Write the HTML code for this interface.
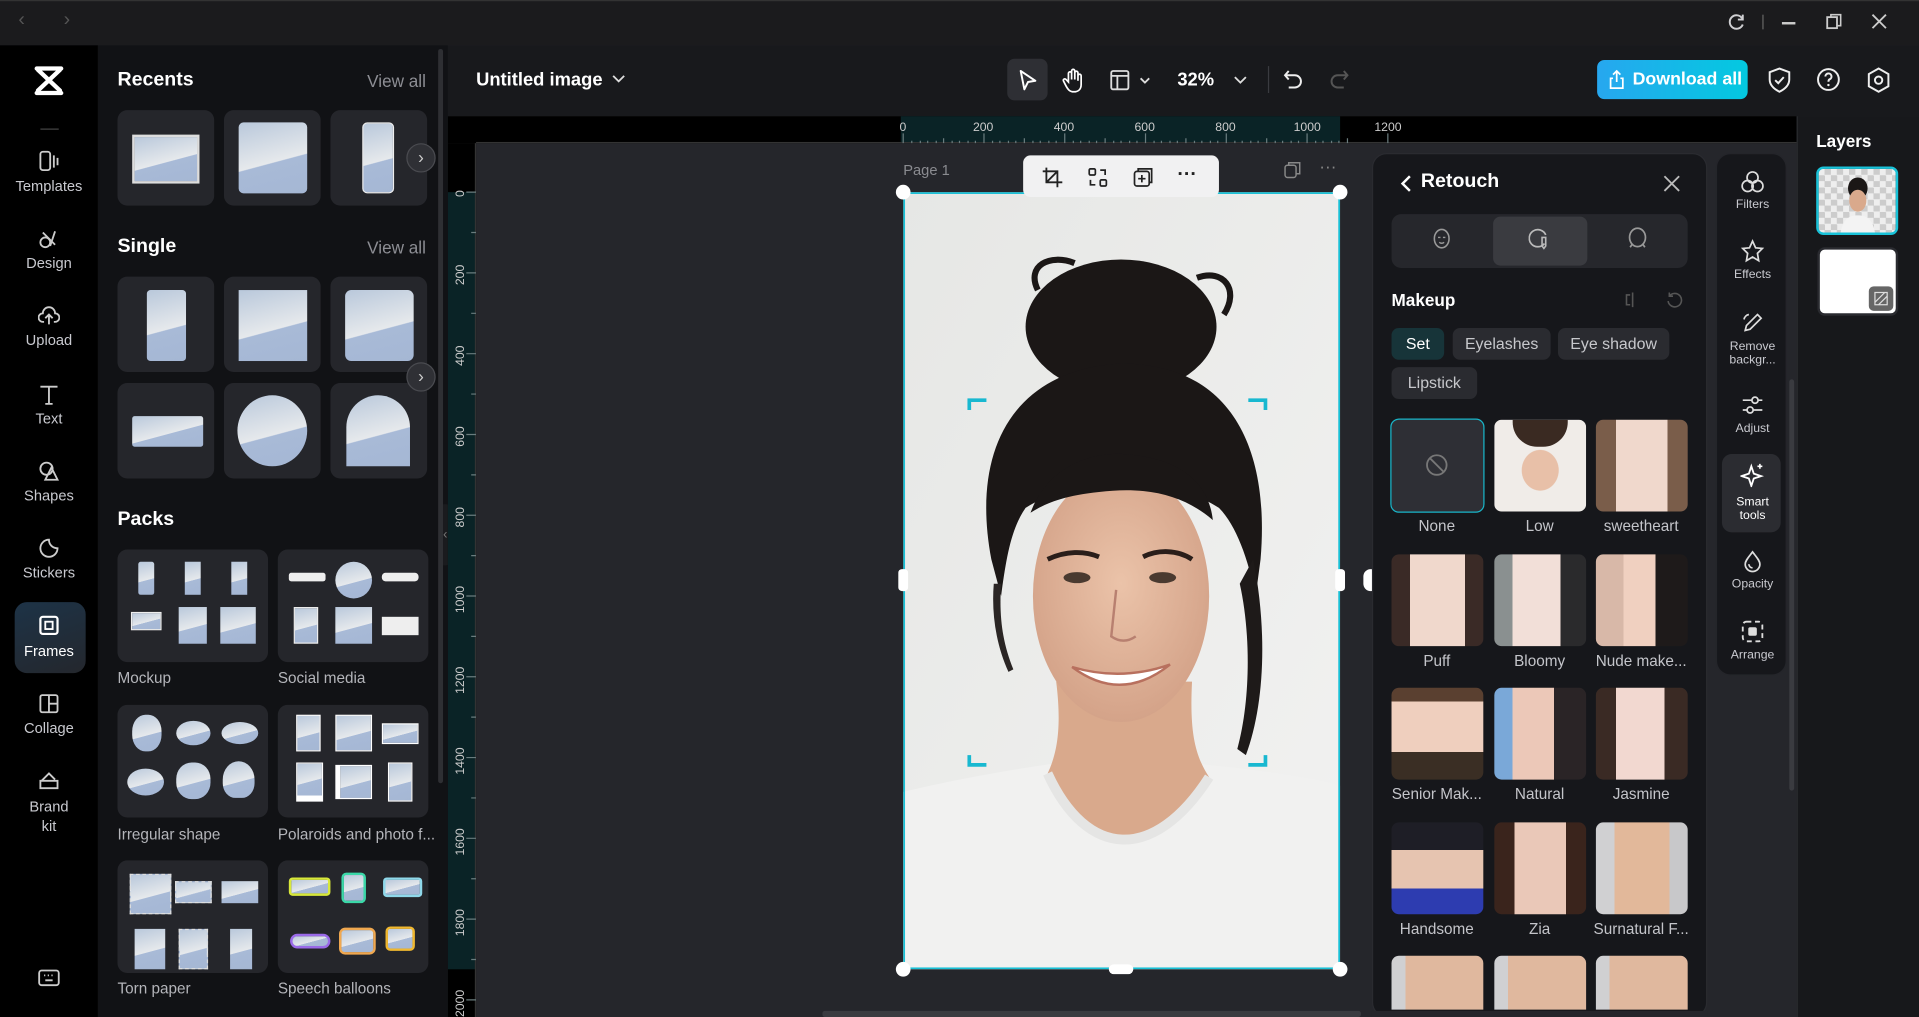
<!DOCTYPE html>
<html><head><meta charset="utf-8"><style>
*{margin:0;padding:0;box-sizing:border-box}
html,body{width:1919px;height:1017px;overflow:hidden;background:#111}
#w{position:absolute;left:0;top:0;width:1568px;height:831px;transform:scale(1.22385,1.22383);transform-origin:0 0;font-family:"Liberation Sans",sans-serif;color:#e6e6e8;overflow:hidden;background:#25262b}
.a{position:absolute}
.t{position:absolute;white-space:nowrap}
.nav .t{width:80px;left:0;text-align:center;font-size:12px;color:#c9cad0}
.nav svg{position:absolute;left:31px}
.card{position:absolute;background:#25262b;border-radius:8px}
.pic{position:absolute;background:linear-gradient(165deg,#b9c8db 0%,#e6e9ec 55%,#a8bad7 56%,#a5b7d4 100%)}
.h{font-weight:bold;font-size:16px;color:#fff}
.va{font-size:14px;color:#8d8e94}
.pk{font-size:12.5px;color:#b4b5ba}
.arrow{position:absolute;width:24px;height:24px;border-radius:50%;background:#2f3035;border:1px solid #4a4b50;color:#ccc;font-size:14px;text-align:center;line-height:21px}
.chip{position:absolute;height:26px;border-radius:6px;background:#2a2b30;font-size:13px;color:#c7c8cc;line-height:26px;text-align:center}
.ph{position:absolute;width:75px;height:75px;border-radius:6px;overflow:hidden}
.lb{position:absolute;width:84px;text-align:center;font-size:12.5px;color:#c4c5ca}
.rt .t{width:58px;text-align:center;left:0;font-size:10px;color:#c9cad0;line-height:11px}
.rt svg{position:absolute;left:19px}
</style></head><body><div id="w">
<!-- title bar -->
<div class="a" style="left:0;top:0;width:1568px;height:37px;background:#1b1b1d;border-top:1px solid #333"></div>
<div class="t" style="left:15px;top:8px;color:#555;font-size:16px">&#8249;</div>
<div class="t" style="left:52px;top:8px;color:#555;font-size:16px">&#8250;</div>
<svg class="a" style="left:1411px;top:10px" width="16" height="16" viewBox="0 0 16 16"><path d="M12.5 5A5.5 5.5 0 1 0 13 10" stroke="#cfcfd2" stroke-width="1.6" fill="none"/><path d="M13 2v4h-4" stroke="#cfcfd2" stroke-width="1.6" fill="none"/></svg>
<div class="a" style="left:1440px;top:12px;width:1px;height:12px;background:#666"></div>
<div class="a" style="left:1456px;top:18px;width:11px;height:1.5px;background:#ccc"></div>
<svg class="a" style="left:1492px;top:11px" width="13" height="13"><rect x="1" y="3" width="8" height="9" stroke="#ccc" fill="none" stroke-width="1.5"/><path d="M4 3V1h8v9h-3" stroke="#ccc" fill="none" stroke-width="1.3"/></svg>
<svg class="a" style="left:1529px;top:11px" width="13" height="13"><path d="M1 1L12 12M12 1L1 12" stroke="#ccc" stroke-width="1.5"/></svg>
<!-- nav rail -->
<div class="a nav" style="left:0;top:37px;width:80px;height:794px;background:#000">
<svg style="left:27px;top:16px" width="26" height="26" viewBox="0 0 26 26"><path d="M3 3h20M3 23h20M4 4l18 17M22 4L4 21" stroke="#fff" stroke-width="3.5" fill="none" stroke-linecap="round"/></svg>
<div class="a" style="left:33px;top:68px;width:15px;height:1px;background:#444"></div>
<svg style="top:86px" width="18" height="18"><rect x="2" y="1" width="8" height="15" rx="2" stroke="#ccc" fill="none" stroke-width="1.5"/><path d="M13 4v10M16 6v6" stroke="#ccc" stroke-width="1.5"/></svg>
<div class="t" style="top:108px">Templates</div>
<svg style="top:149px" width="18" height="18"><circle cx="6" cy="12" r="4" stroke="#ccc" fill="none" stroke-width="1.5"/><path d="M4 4l10 10M14 3l-4 12" stroke="#ccc" stroke-width="1.5"/></svg>
<div class="t" style="top:171px">Design</div>
<svg style="top:212px" width="18" height="18"><path d="M5 14H4a3.5 3.5 0 0 1 0-7 5 5 0 0 1 10 0 3.5 3.5 0 0 1 0 7h-1M9 16V9M6 11l3-3 3 3" stroke="#ccc" fill="none" stroke-width="1.5"/></svg>
<div class="t" style="top:234px">Upload</div>
<svg style="top:276px" width="18" height="18"><path d="M2 3h14M9 3v14M6 17h6" stroke="#ccc" fill="none" stroke-width="1.5"/></svg>
<div class="t" style="top:298px">Text</div>
<svg style="top:339px" width="18" height="18"><circle cx="7" cy="7" r="5" stroke="#ccc" fill="none" stroke-width="1.5"/><path d="M11 6l5 10H6z" stroke="#ccc" fill="none" stroke-width="1.5"/></svg>
<div class="t" style="top:361px">Shapes</div>
<svg style="top:402px" width="18" height="18"><path d="M9 2a7 7 0 1 0 7 7c-4 0-7-3-7-7z" stroke="#ccc" fill="none" stroke-width="1.5"/></svg>
<div class="t" style="top:424px">Stickers</div>
<div class="a" style="left:12px;top:455px;width:58px;height:58px;border-radius:10px;background:linear-gradient(160deg,#1d3347,#24272d)"></div>
<svg style="top:465px" width="18" height="18"><rect x="2" y="2" width="14" height="14" rx="2" stroke="#fff" fill="none" stroke-width="1.8"/><rect x="6" y="6" width="6" height="6" stroke="#fff" fill="none" stroke-width="1.5"/></svg>
<div class="t" style="top:488px;color:#fff">Frames</div>
<svg style="top:529px" width="18" height="18"><rect x="2" y="2" width="14" height="14" rx="1.5" stroke="#ccc" fill="none" stroke-width="1.5"/><path d="M9 2v14M9 9h7" stroke="#ccc" stroke-width="1.5"/></svg>
<div class="t" style="top:551px">Collage</div>
<svg style="top:592px" width="18" height="18"><path d="M2 9h14v6H2zM3 9l6-6 5 5" stroke="#ccc" fill="none" stroke-width="1.5"/></svg>
<div class="t" style="top:614px;line-height:16px">Brand<br>kit</div>
<svg style="top:754px" width="18" height="16"><rect x="1" y="2" width="16" height="12" rx="2" stroke="#ccc" fill="none" stroke-width="1.5"/><path d="M5 6h1M8 6h1M11 6h1M6 10h6" stroke="#ccc" stroke-width="1.5"/></svg>
</div>
<!-- left panel -->
<div class="a" style="left:80px;top:37px;width:286px;height:794px;background:#111215"></div>
<div class="a" style="left:358px;top:40px;width:4px;height:600px;border-radius:2px;background:#2e2f33"></div>
<div class="t h" style="left:96px;top:57px">Recents</div><div class="t va" style="left:300px;top:58px">View all</div>
<div class="card" style="left:96px;top:90px;width:79px;height:78px"><div class="pic" style="left:12px;top:20px;width:55px;height:40px;border:2px solid #ddd"></div></div>
<div class="card" style="left:183px;top:90px;width:79px;height:78px"><div class="pic" style="left:12px;top:10px;width:56px;height:58px;border-radius:4px"></div></div>
<div class="card" style="left:270px;top:90px;width:79px;height:78px"><div class="pic" style="left:26px;top:10px;width:26px;height:58px;border-radius:4px;border:1px solid #eee"></div></div>
<div class="arrow" style="left:332px;top:117px">&#8250;</div>
<div class="t h" style="left:96px;top:193px">Single</div><div class="t va" style="left:300px;top:194px">View all</div>
<div class="card" style="left:96px;top:226px;width:79px;height:78px"><div class="pic" style="left:24px;top:11px;width:32px;height:58px;border-radius:3px"></div></div>
<div class="card" style="left:183px;top:226px;width:79px;height:78px"><div class="pic" style="left:12px;top:11px;width:56px;height:58px"></div></div>
<div class="card" style="left:270px;top:226px;width:79px;height:78px"><div class="pic" style="left:12px;top:11px;width:56px;height:58px;border-radius:5px"></div></div>
<div class="card" style="left:96px;top:313px;width:79px;height:78px"><div class="pic" style="left:12px;top:27px;width:58px;height:25px;border-radius:2px"></div></div>
<div class="card" style="left:183px;top:313px;width:79px;height:78px"><div class="pic" style="left:11px;top:10px;width:57px;height:58px;border-radius:50%"></div></div>
<div class="card" style="left:270px;top:313px;width:79px;height:78px"><div class="pic" style="left:13px;top:10px;width:52px;height:58px;border-radius:26px 26px 0 0"></div></div>
<div class="arrow" style="left:332px;top:296px">&#8250;</div>
<div class="t h" style="left:96px;top:416px">Packs</div>
<!-- pack cards -->
<div class="card" style="left:96px;top:449px;width:123px;height:92px">
<div class="pic" style="left:17px;top:10px;width:13px;height:27px;border-radius:2px"></div><div class="pic" style="left:55px;top:10px;width:13px;height:27px"></div><div class="pic" style="left:93px;top:10px;width:13px;height:27px"></div>
<div class="pic" style="left:11px;top:51px;width:25px;height:15px;border:1px solid #eee"></div><div class="pic" style="left:50px;top:47px;width:23px;height:30px"></div><div class="pic" style="left:84px;top:47px;width:29px;height:30px"></div></div>
<div class="card" style="left:227px;top:449px;width:123px;height:92px">
<div class="a" style="left:9px;top:19px;width:30px;height:7px;background:#eee;border-radius:2px"></div><div class="pic" style="left:47px;top:10px;width:30px;height:30px;border-radius:50%"></div><div class="a" style="left:85px;top:19px;width:30px;height:7px;background:#eee;border-radius:3px"></div>
<div class="pic" style="left:13px;top:47px;width:20px;height:30px;border:1px solid #eee"></div><div class="pic" style="left:47px;top:47px;width:30px;height:30px"></div><div class="a" style="left:85px;top:55px;width:30px;height:15px;background:#eee"></div></div>
<div class="t pk" style="left:96px;top:547px">Mockup</div><div class="t pk" style="left:227px;top:547px">Social media</div>
<div class="card" style="left:96px;top:576px;width:123px;height:92px">
<div class="pic" style="left:12px;top:8px;width:24px;height:30px;border-radius:45%"></div><div class="pic" style="left:48px;top:13px;width:28px;height:20px;border-radius:50%"></div><div class="pic" style="left:85px;top:14px;width:30px;height:18px;border-radius:50%"></div>
<div class="pic" style="left:8px;top:52px;width:30px;height:22px;border-radius:50%"></div><div class="pic" style="left:48px;top:47px;width:28px;height:30px;border-radius:45%"></div><div class="pic" style="left:86px;top:46px;width:26px;height:30px;border-radius:50% 50% 40% 40%"></div></div>
<div class="card" style="left:227px;top:576px;width:123px;height:92px">
<div class="pic" style="left:15px;top:8px;width:20px;height:30px;border:1px solid #fff"></div><div class="pic" style="left:47px;top:8px;width:30px;height:30px;border:1px solid #fff"></div><div class="pic" style="left:85px;top:15px;width:30px;height:17px;border:1px solid #fff"></div>
<div class="pic" style="left:15px;top:47px;width:22px;height:32px;border:1px solid #fff;border-bottom:5px solid #fff"></div><div class="pic" style="left:47px;top:49px;width:30px;height:28px;border:1px solid #fff;border-left:4px solid #fff"></div><div class="pic" style="left:90px;top:47px;width:20px;height:32px;border:1px solid #fff"></div></div>
<div class="t pk" style="left:96px;top:675px">Irregular shape</div><div class="t pk" style="left:227px;top:675px">Polaroids and photo f...</div>
<div class="card" style="left:96px;top:703px;width:123px;height:92px">
<div class="pic" style="left:10px;top:11px;width:34px;height:33px;border:1px dashed #ddd"></div><div class="pic" style="left:47px;top:17px;width:30px;height:18px;border:1px dashed #ddd"></div><div class="pic" style="left:85px;top:17px;width:30px;height:18px"></div>
<div class="pic" style="left:14px;top:56px;width:25px;height:33px"></div><div class="pic" style="left:50px;top:56px;width:24px;height:33px;border:1px dashed #ddd"></div><div class="pic" style="left:92px;top:56px;width:18px;height:33px"></div></div>
<div class="card" style="left:227px;top:703px;width:123px;height:92px">
<div class="pic" style="left:9px;top:14px;width:34px;height:15px;border:2px solid #d8e83a;border-radius:3px"></div><div class="pic" style="left:52px;top:10px;width:20px;height:25px;border:2px solid #3bd8a8;border-radius:4px"></div><div class="pic" style="left:86px;top:14px;width:32px;height:16px;border:2px solid #8fd8ea;border-radius:3px"></div>
<div class="pic" style="left:10px;top:60px;width:33px;height:12px;border:2px solid #9a6ae8;border-radius:6px"></div><div class="pic" style="left:50px;top:55px;width:30px;height:22px;border:2px solid #f0a850;border-radius:5px"></div><div class="pic" style="left:88px;top:54px;width:24px;height:20px;border:2px solid #f0b830;border-radius:4px"></div></div>
<div class="t pk" style="left:96px;top:801px">Torn paper</div><div class="t pk" style="left:227px;top:801px">Speech balloons</div>
<div class="a" style="left:362px;top:412px;width:10px;height:50px;background:#1a1b1e;border-radius:0 8px 8px 0;color:#777;font-size:11px;line-height:50px">&#8249;</div>
<!-- top toolbar -->
<div class="a" style="left:366px;top:37px;width:1202px;height:58px;background:#18191c"></div>
<div class="t" style="left:389px;top:57px;font-size:15px;font-weight:bold;color:#fff">Untitled image</div>
<svg class="a" style="left:500px;top:61px" width="11" height="8"><path d="M1 1l4.5 4.5L10 1" stroke="#ddd" stroke-width="1.5" fill="none"/></svg>
<div class="a" style="left:823px;top:48px;width:33px;height:34px;border-radius:6px;background:#2e2f34"></div>
<svg class="a" style="left:831px;top:56px" width="18" height="20"><path d="M3 2l12 8-6 1-3 6z" stroke="#fff" stroke-width="1.6" fill="none" stroke-linejoin="round"/></svg>
<svg class="a" style="left:867px;top:55px" width="20" height="22"><path d="M6 12V5a1.3 1.3 0 0 1 2.6 0v5V3a1.3 1.3 0 0 1 2.6 0v7V4.5a1.3 1.3 0 0 1 2.6 0V11V7a1.3 1.3 0 0 1 2.6 0v7c0 4-2.5 6-6 6s-5-2-7-6l-1.5-3a1.2 1.2 0 0 1 2-1.2z" stroke="#fff" stroke-width="1.4" fill="none"/></svg>
<svg class="a" style="left:906px;top:57px" width="36" height="18"><rect x="2" y="1" width="14" height="15" rx="1.5" stroke="#ddd" stroke-width="1.5" fill="none"/><path d="M2 5h14M7 5v11M26 7l3.5 3.5L33 7" stroke="#ddd" stroke-width="1.5" fill="none"/></svg>
<div class="t" style="left:962px;top:57px;font-size:15px;font-weight:bold;color:#fff">32%</div>
<svg class="a" style="left:1008px;top:62px" width="11" height="8"><path d="M1 1l4.5 4.5L10 1" stroke="#ddd" stroke-width="1.5" fill="none"/></svg>
<div class="a" style="left:1036px;top:54px;width:1px;height:22px;background:#3a3b40"></div>
<svg class="a" style="left:1048px;top:56px" width="18" height="18"><path d="M5 2L2 5.5 5 9M2 5.5h8a5 5 0 0 1 0 10H5" stroke="#eee" stroke-width="1.6" fill="none"/></svg>
<svg class="a" style="left:1085px;top:56px" width="18" height="18"><path d="M13 2l3 3.5L13 9M16 5.5H8a5 5 0 0 0 0 10h5" stroke="#555" stroke-width="1.6" fill="none"/></svg>
<div class="a" style="left:1305px;top:49px;width:123px;height:32px;border-radius:6px;background:linear-gradient(90deg,#27a7ef,#03c9e0)"></div>
<svg class="a" style="left:1314px;top:57px" width="14" height="16"><path d="M7 1v9M4 4l3-3 3 3M4 7H2v8h10V7h-2" stroke="#fff" stroke-width="1.4" fill="none"/></svg>
<div class="t" style="left:1334px;top:57px;font-size:14.5px;font-weight:bold;color:#fff">Download all</div>
<svg class="a" style="left:1444px;top:55px" width="20" height="21"><path d="M10 1l8 3v6c0 5-4 8-8 10-4-2-8-5-8-10V4z" stroke="#eee" stroke-width="1.6" fill="none"/><path d="M6.5 10.5l2.5 2.5 4.5-5" stroke="#eee" stroke-width="1.6" fill="none"/></svg>
<svg class="a" style="left:1484px;top:55px" width="20" height="20"><circle cx="10" cy="10" r="8.5" stroke="#eee" stroke-width="1.6" fill="none"/><path d="M7.5 7.5a2.5 2.5 0 1 1 3.5 2.3c-.8.4-1 1-1 2" stroke="#eee" stroke-width="1.6" fill="none"/><circle cx="10" cy="14.5" r="1" fill="#eee"/></svg>
<svg class="a" style="left:1525px;top:55px" width="20" height="21"><path d="M10 1l8 4.5v10L10 20l-8-4.5v-10z" stroke="#eee" stroke-width="1.6" fill="none"/><circle cx="10" cy="10.5" r="3" stroke="#eee" stroke-width="1.6" fill="none"/></svg>
<!-- rulers -->
<div class="a" style="left:366px;top:95px;width:1102px;height:22px;background:#000"></div>
<div class="a" style="left:736px;top:95px;width:359px;height:22px;background:#0a2326"></div>
<div class="a" style="left:366px;top:117px;width:23px;height:714px;background:#000"></div>
<div class="a" style="left:366px;top:157px;width:23px;height:635px;background:#0a2326"></div>
<div class="a" style="left:389px;top:116px;width:1079px;height:1px;background:#333"></div>
<div class="a" style="left:388px;top:117px;width:1px;height:714px;background:#333"></div>
<svg class="a" style="left:389px;top:95px" width="790" height="22"><g stroke="#6a7c7e" stroke-width="1">
<path d="M349 22v-8M382 22v-4M415 22v-8M448 22v-4M481 22v-8M514 22v-4M547 22v-8M580 22v-4M613 22v-8M646 22v-4M679 22v-8M712 22v-4M745 22v-8M356 22v-2M363 22v-2M369 22v-2M376 22v-2M389 22v-2M395 22v-2M402 22v-2M408 22v-2M422 22v-2M428 22v-2M435 22v-2M441 22v-2M455 22v-2M461 22v-2M468 22v-2M474 22v-2M488 22v-2M494 22v-2M501 22v-2M507 22v-2M521 22v-2M527 22v-2M534 22v-2M540 22v-2M554 22v-2M560 22v-2M567 22v-2M573 22v-2M587 22v-2M593 22v-2M600 22v-2M606 22v-2M620 22v-2M626 22v-2M633 22v-2M639 22v-2M653 22v-2M659 22v-2M666 22v-2M672 22v-2M686 22v-2M692 22v-2M699 22v-2M705 22v-2"/></g>
<g fill="#ccc" font-size="10" font-family="Liberation Sans"><text x="346" y="12">0</text><text x="406" y="12">200</text><text x="472" y="12">400</text><text x="538" y="12">600</text><text x="604" y="12">800</text><text x="668" y="12">1000</text><text x="734" y="12">1200</text></g></svg>
<svg class="a" style="left:366px;top:117px" width="23" height="714"><g stroke="#6a7c7e"><path d="M15 40h8M19 73h4M15 106h8M19 139h4M15 172h8M19 205h4M15 238h8M19 271h4M15 304h8M19 337h4M15 370h8M19 403h4M15 436h8M19 469h4M15 502h8M19 535h4M15 568h8M19 601h4M15 634h8M19 667h4M15 700h8"/></g>
<g fill="#ccc" font-size="10" font-family="Liberation Sans"><text transform="translate(13,44) rotate(-90)">0</text><text transform="translate(13,116) rotate(-90)">200</text><text transform="translate(13,182) rotate(-90)">400</text><text transform="translate(13,248) rotate(-90)">600</text><text transform="translate(13,314) rotate(-90)">800</text><text transform="translate(13,384) rotate(-90)">1000</text><text transform="translate(13,450) rotate(-90)">1200</text><text transform="translate(13,516) rotate(-90)">1400</text><text transform="translate(13,582) rotate(-90)">1600</text><text transform="translate(13,648) rotate(-90)">1800</text><text transform="translate(13,714) rotate(-90)">2000</text></g></svg>
<!-- canvas photo -->
<div class="t" style="left:738px;top:132px;font-size:12px;color:#8a8b90">Page 1</div>
<svg class="a" style="left:1049px;top:132px" width="14" height="14"><rect x="1" y="3" width="9" height="10" rx="2" stroke="#888" fill="none" stroke-width="1.2"/><path d="M4 3V1h9v9h-3" stroke="#888" fill="none" stroke-width="1.2"/></svg>
<div class="t" style="left:1078px;top:128px;font-size:14px;color:#888">&middot;&middot;&middot;</div>
<svg class="a" style="left:738px;top:157px" width="357" height="635" viewBox="0 0 357 635">
<defs><linearGradient id="bg" x1="0" y1="0" x2="1" y2="1"><stop offset="0" stop-color="#e6e7e5"/><stop offset="1" stop-color="#f2f2f1"/></linearGradient>
<radialGradient id="sk" cx=".5" cy=".45" r=".6"><stop offset="0" stop-color="#ebc3a9"/><stop offset="1" stop-color="#d2a086"/></radialGradient></defs>
<rect width="357" height="635" fill="url(#bg)"/>
<path d="M0 490 C50 478 100 470 130 466 L230 466 C270 470 320 475 357 485 V635H0z" fill="#f1f1f0"/>
<path d="M125 400 C130 440 125 460 118 475 C150 540 205 545 250 478 C238 460 234 440 236 400z" fill="#d9a98c"/>
<path d="M118 475 C150 545 205 548 250 478" stroke="#e5e5e4" stroke-width="8" fill="none"/>
<ellipse cx="178" cy="110" rx="78" ry="55" fill="#1b1716"/>
<path d="M110 80 C100 60 120 50 140 58M240 70 C262 62 275 80 262 100" stroke="#1b1716" stroke-width="5" fill="none"/>
<path d="M72 300 C55 210 90 145 178 140 C265 140 300 205 292 300 L288 330 C282 300 272 272 258 258 C220 232 140 232 100 258 C88 275 84 300 80 330z" fill="#1b1716"/>
<path d="M286 300 C298 360 295 420 280 460 L273 455 C284 415 284 360 275 320z" fill="#1e1a19"/>
<path d="M80 320 C78 350 82 370 90 390 L86 392 C76 370 72 345 74 320z" fill="#2a2524"/>
<ellipse cx="178" cy="330" rx="72" ry="103" fill="url(#sk)"/>
<path d="M104 262 C120 220 160 210 190 215 C230 220 250 240 253 268 C230 248 200 240 160 245 C130 248 115 255 104 262z" fill="#1b1716"/>
<path d="M118 300c15-7 30-7 42-2M196 298c12-6 28-6 40 2" stroke="#2a1e1a" stroke-width="4" fill="none"/>
<ellipse cx="142" cy="315" rx="11" ry="4.5" fill="#4a3a30"/><ellipse cx="212" cy="315" rx="11" ry="4.5" fill="#4a3a30"/>
<path d="M138 388 Q178 418 218 386 Q178 400 138 388z" fill="#fff" stroke="#b8705e" stroke-width="2"/>
<path d="M174 325 L170 363 Q180 370 190 363" stroke="#b88070" stroke-width="2" fill="none"/>
<rect x="0.75" y="0.75" width="355.5" height="633.5" fill="none" stroke="#18c0d6" stroke-width="1.5"/>
<g stroke="#18b8d0" stroke-width="3" fill="none"><path d="M55 178v-8h14M297 178v-8h-14M55 460v8h14M297 460v8h-14" transform="translate(-1,0)"/></g>
</svg>
<div class="a" style="left:732px;top:151px;width:12px;height:12px;border-radius:50%;background:#fff"></div>
<div class="a" style="left:1089px;top:151px;width:12px;height:12px;border-radius:50%;background:#fff"></div>
<div class="a" style="left:732px;top:786px;width:12px;height:12px;border-radius:50%;background:#fff"></div>
<div class="a" style="left:1089px;top:786px;width:12px;height:12px;border-radius:50%;background:#fff"></div>
<div class="a" style="left:734px;top:465px;width:8px;height:18px;border-radius:3px;background:#fff"></div>
<div class="a" style="left:1091px;top:465px;width:8px;height:18px;border-radius:3px;background:#fff"></div>
<div class="a" style="left:906px;top:788px;width:20px;height:8px;border-radius:4px;background:#fff"></div>
<!-- floating toolbar -->
<div class="a" style="left:836px;top:127px;width:160px;height:34px;border-radius:6px;background:#f1f1f2"></div>
<svg class="a" style="left:851px;top:136px" width="18" height="18"><path d="M4 1v12h13M1 4h12v13M13 4L4 13" stroke="#222" stroke-width="1.5" fill="none"/></svg>
<svg class="a" style="left:888px;top:136px" width="18" height="18"><rect x="2" y="2" width="5" height="5" rx="1" stroke="#222" fill="none" stroke-width="1.4"/><rect x="11" y="11" width="5" height="5" rx="1" stroke="#222" fill="none" stroke-width="1.4"/><path d="M11 3h4v4M7 15H3v-4" stroke="#222" fill="none" stroke-width="1.4"/></svg>
<svg class="a" style="left:925px;top:136px" width="18" height="18"><rect x="2" y="4" width="12" height="12" rx="2" stroke="#222" fill="none" stroke-width="1.4"/><path d="M5 4V2h11v11h-2M8 7v6M5 10h6" stroke="#222" fill="none" stroke-width="1.4"/></svg>
<div class="t" style="left:962px;top:134px;font-size:16px;color:#222;font-weight:bold">&middot;&middot;&middot;</div>
<div class="a" style="left:1114px;top:465px;width:12px;height:18px;border-radius:6px;background:#fff"></div>
<!-- retouch panel -->
<div class="a" style="left:1121px;top:125px;width:274px;height:706px;background:#16171b;border:1px solid #2a2b30;border-radius:12px"></div>
<svg class="a" style="left:1143px;top:142px" width="12" height="16"><path d="M9 2L3 8l6 6" stroke="#fff" stroke-width="2" fill="none"/></svg>
<div class="t" style="left:1161px;top:140px;font-size:16px;font-weight:bold;color:#fff">Retouch</div>
<svg class="a" style="left:1359px;top:143px" width="14" height="14"><path d="M1 1l12 12M13 1L1 13" stroke="#bbb" stroke-width="1.5"/></svg>
<div class="a" style="left:1137px;top:175px;width:242px;height:44px;border-radius:8px;background:#26272c"></div>
<div class="a" style="left:1220px;top:177px;width:77px;height:40px;border-radius:6px;background:#3a3b40"></div>
<svg class="a" style="left:1170px;top:186px" width="16" height="18"><ellipse cx="8" cy="9" rx="6" ry="7.5" stroke="#999" fill="none" stroke-width="1.3"/><path d="M5 8h2M9 8h2M6 12q2 1.5 4 0" stroke="#999" fill="none" stroke-width="1.2"/></svg>
<svg class="a" style="left:1249px;top:185px" width="18" height="20"><path d="M13 14a7 7 0 1 1 1-7" stroke="#bbb" fill="none" stroke-width="1.4"/><path d="M11 9h3v7l-1.5 2-1.5-2z" stroke="#bbb" fill="none" stroke-width="1.3"/></svg>
<svg class="a" style="left:1329px;top:185px" width="18" height="20"><ellipse cx="9" cy="9" rx="6.5" ry="7.5" stroke="#999" fill="none" stroke-width="1.4"/><path d="M3 17l2-3M15 17l-2-3" stroke="#999" stroke-width="1.4"/></svg>
<div class="t" style="left:1137px;top:237px;font-size:14px;font-weight:bold;color:#fff">Makeup</div>
<svg class="a" style="left:1327px;top:238px" width="14" height="14"><path d="M7 1v12M5 3H2v8h3" stroke="#555" fill="none" stroke-width="1.3"/></svg>
<svg class="a" style="left:1361px;top:238px" width="14" height="14"><path d="M3 4a5.5 5.5 0 1 1-1 4M3 1v3h3" stroke="#555" fill="none" stroke-width="1.3"/></svg>
<div class="chip" style="left:1137px;top:268px;width:43px;background:#173439;color:#fff">Set</div>
<div class="chip" style="left:1187px;top:268px;width:80px">Eyelashes</div>
<div class="chip" style="left:1273px;top:268px;width:91px">Eye shadow</div>
<div class="chip" style="left:1137px;top:300px;width:70px">Lipstick</div>
<!-- grid -->
<div class="ph" style="left:1136px;top:342px;width:77px;height:77px;background:#2e2f35;border:1.5px solid #19b6c9;border-radius:7px"></div>
<svg class="a" style="left:1164px;top:370px" width="20" height="20"><circle cx="10" cy="10" r="8" stroke="#777" fill="none" stroke-width="1.5"/><path d="M4.5 4.5l11 11" stroke="#777" stroke-width="1.5"/></svg>
<div class="ph" style="left:1221px;top:343px;background:radial-gradient(ellipse at 50% 55%,#e8c0a8 0 28%,#f0ece8 29% 100%),#eee"><div class="a" style="left:15px;top:0;width:45px;height:22px;background:#3a2a22;border-radius:0 0 20px 20px"></div></div>
<div class="ph" style="left:1304px;top:343px;background:linear-gradient(90deg,#7a5d4a 0 22%,#f0d8cc 22% 78%,#7a5d4a 78%)"></div>
<div class="lb" style="left:1132px;top:423px">None</div><div class="lb" style="left:1216px;top:423px">Low</div><div class="lb" style="left:1299px;top:423px">sweetheart</div>
<div class="ph" style="left:1137px;top:453px;background:linear-gradient(90deg,#3a2a26 0 20%,#f0d8cc 20% 80%,#3a2a26 80%)"></div>
<div class="ph" style="left:1221px;top:453px;background:linear-gradient(90deg,#8a9090 0 20%,#f2dfd8 20% 72%,#2a2a2c 72%)"></div>
<div class="ph" style="left:1304px;top:453px;background:linear-gradient(90deg,#d8b8a8 0 30%,#f0d0c0 30% 65%,#1e1a1a 65%)"></div>
<div class="lb" style="left:1132px;top:533px">Puff</div><div class="lb" style="left:1216px;top:533px">Bloomy</div><div class="lb" style="left:1299px;top:533px">Nude make...</div>
<div class="ph" style="left:1137px;top:562px;background:linear-gradient(180deg,#5a4030 0 15%,#efcfbe 15% 70%,#3a2e24 70%)"></div>
<div class="ph" style="left:1221px;top:562px;background:linear-gradient(90deg,#7aa8d8 0 20%,#ecc8b8 20% 65%,#2a2426 65%)"></div>
<div class="ph" style="left:1304px;top:562px;background:linear-gradient(90deg,#3a2a24 0 22%,#f2d8d0 22% 75%,#3a2a24 75%)"></div>
<div class="lb" style="left:1132px;top:642px">Senior Mak...</div><div class="lb" style="left:1216px;top:642px">Natural</div><div class="lb" style="left:1299px;top:642px">Jasmine</div>
<div class="ph" style="left:1137px;top:672px;background:linear-gradient(180deg,#1e1e26 0 30%,#e6c4b0 30% 72%,#2d3cb0 72%)"></div>
<div class="ph" style="left:1221px;top:672px;background:linear-gradient(90deg,#3a241c 0 22%,#eac8b8 22% 78%,#3a241c 78%)"></div>
<div class="ph" style="left:1304px;top:672px;background:linear-gradient(90deg,#d0d0d2 0 20%,#e2b89a 20% 80%,#c8c8ca 80%)"></div>
<div class="lb" style="left:1132px;top:752px">Handsome</div><div class="lb" style="left:1216px;top:752px">Zia</div><div class="lb" style="left:1299px;top:752px">Surnatural F...</div>
<div class="ph" style="left:1137px;top:781px;height:44px;border-radius:6px 6px 0 0;background:linear-gradient(90deg,#d0d0d2 0 15%,#e0b89e 15%)"></div>
<div class="ph" style="left:1221px;top:781px;height:44px;border-radius:6px 6px 0 0;background:linear-gradient(90deg,#d0d0d2 0 15%,#e0b89e 15%)"></div>
<div class="ph" style="left:1304px;top:781px;height:44px;border-radius:6px 6px 0 0;background:linear-gradient(90deg,#d0d0d2 0 15%,#e0b89e 15%)"></div>
<div class="a" style="left:1121px;top:826px;width:274px;height:5px;background:#25262b"></div>
<!-- right tool rail -->
<div class="a rt" style="left:1402px;top:125px;width:58px;height:427px;background:#16171b;border:1px solid #24252a;border-radius:12px">
<svg style="top:13px" width="20" height="20"><circle cx="10" cy="6" r="4.5" stroke="#ddd" fill="none" stroke-width="1.4"/><circle cx="6" cy="13" r="4.5" stroke="#ddd" fill="none" stroke-width="1.4"/><circle cx="14" cy="13" r="4.5" stroke="#ddd" fill="none" stroke-width="1.4"/></svg>
<div class="t" style="top:36px">Filters</div>
<svg style="top:69px" width="20" height="22"><path d="M10 2l2.5 5.5 5.5.5-4 4 1 6-5-3-5 3 1-6-4-4 5.5-.5z" stroke="#ddd" fill="none" stroke-width="1.4"/></svg>
<div class="t" style="top:93px">Effects</div>
<svg style="top:128px" width="20" height="20"><path d="M14 3l3 3-9 9-4 1 1-4zM3 7a5 5 0 0 1 4-4" stroke="#ddd" fill="none" stroke-width="1.4"/></svg>
<div class="t" style="top:152px">Remove<br>backgr...</div>
<svg style="top:195px" width="20" height="20"><path d="M2 6h16M2 14h16" stroke="#ddd" stroke-width="1.4"/><circle cx="12" cy="6" r="2.5" fill="#16171b" stroke="#ddd" stroke-width="1.4"/><circle cx="8" cy="14" r="2.5" fill="#16171b" stroke="#ddd" stroke-width="1.4"/></svg>
<div class="t" style="top:219px">Adjust</div>
<div class="a" style="left:4px;top:245px;width:48px;height:64px;border-radius:8px;background:#2b2c31"></div>
<svg style="top:252px" width="20" height="20"><path d="M9 3l2 6 6 2-6 2-2 6-2-6-6-2 6-2z" stroke="#fff" fill="none" stroke-width="1.5"/><path d="M16 1v4M14 3h4" stroke="#fff" stroke-width="1.3"/></svg>
<div class="t" style="top:279px;color:#fff">Smart<br>tools</div>
<svg style="top:323px" width="20" height="20"><path d="M10 2c3 4 6 7 6 10a6 6 0 0 1-12 0c0-3 3-6 6-10z" stroke="#ddd" fill="none" stroke-width="1.4"/><path d="M7 12a3 3 0 0 0 3 3" stroke="#ddd" fill="none" stroke-width="1.3"/></svg>
<div class="t" style="top:346px">Opacity</div>
<svg style="top:380px" width="20" height="20"><rect x="2" y="2" width="16" height="16" rx="3" stroke="#ddd" fill="none" stroke-width="1.5" stroke-dasharray="4 3"/><rect x="6.5" y="6.5" width="7" height="7" rx="1.5" fill="#ddd"/></svg>
<div class="t" style="top:404px">Arrange</div>
</div>
<div class="a" style="left:1462px;top:310px;width:4px;height:336px;border-radius:2px;background:#3a3b40"></div>
<!-- layers -->
<div class="a" style="left:1468px;top:95px;width:100px;height:736px;background:#17181b;border-left:1px solid #2a2b2f"></div>
<div class="t" style="left:1484px;top:107px;font-size:14px;font-weight:bold;color:#fff">Layers</div>
<div class="a" style="left:1484px;top:136px;width:67px;height:56px;border:2px solid #19c2d8;border-radius:6px;background:repeating-conic-gradient(#ccc 0 25%,#eee 0 50%) 0 0/10px 10px;overflow:hidden">
<svg width="63" height="52"><ellipse cx="32" cy="16" rx="8" ry="9" fill="#1b1716"/><ellipse cx="32" cy="26" rx="7" ry="9" fill="#d9a98c"/><path d="M18 52c2-12 8-14 14-14s12 2 14 14z" fill="#f3f3f3"/></svg></div>
<div class="a" style="left:1485px;top:202px;width:66px;height:56px;border:2px solid #2a2b30;border-radius:6px;background:#fff"></div>
<div class="a" style="left:1527px;top:234px;width:20px;height:20px;border-radius:4px;background:#666"></div>
<svg class="a" style="left:1531px;top:238px" width="12" height="12"><rect x="1" y="1" width="10" height="10" stroke="#ddd" fill="none"/><path d="M1 9l8-8M4 11l7-7" stroke="#ddd"/></svg>
<div class="a" style="left:672px;top:826px;width:440px;height:5px;border-radius:2px;background:#3a3b40"></div>
</div></body></html>
